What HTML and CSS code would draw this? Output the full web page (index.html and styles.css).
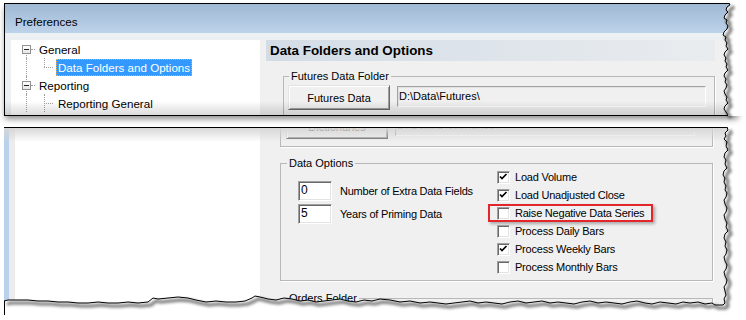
FILE: index.html
```html
<!DOCTYPE html>
<html lang="en">
  <head>
    <meta charset="UTF-8" />
    <title>Preferences - Data Folders and Options</title>
    <link rel="stylesheet" href="styles.css">
  </head>
  <body>
    <div class="shot">
      <!-- Upper torn piece: title bar, tree and folder group -->
      <div class="piece piece-top">
        <div class="titlebar">Preferences</div>
        <div class="win-body">
          <div class="tree">
            <div class="node">
              <span class="cell g-down hook-exp"><span class="exp"></span></span>
              <span class="label">General</span>
            </div>
            <div class="node">
              <span class="cell g-full"></span>
              <span class="cell g-elbow hook"></span>
              <span class="label selected">Data Folders and Options</span>
            </div>
            <div class="node">
              <span class="cell g-full hook-exp"><span class="exp"></span></span>
              <span class="label">Reporting</span>
            </div>
            <div class="node">
              <span class="cell g-full"></span>
              <span class="cell g-full hook"></span>
              <span class="label">Reporting General</span>
            </div>
          </div>
          <div class="panel">
            <div class="panel-head">Data Folders and Options</div>
            <fieldset class="group group-futures">
              <legend>Futures Data Folder</legend>
              <div class="folder-row">
                <button class="btn">Futures Data</button>
                <div class="path-field">D:\Data\Futures\</div>
              </div>
            </fieldset>
          </div>
        </div>
        <div class="fade-bottom"></div>
      </div>

      <!-- Lower torn piece: data options -->
      <div class="piece piece-bottom">
        <div class="win-body">
          <div class="frame-blue"></div>
          <div class="frame-gray"></div>
          <div class="tree tree-low"></div>
          <div class="panel">
            <div class="group group-cut">
              <button class="btn">Dictionaries</button>
              <div class="path-field">D:\Data\Dictionaries\</div>
            </div>

            <fieldset class="group group-options">
              <legend>Data Options</legend>
              <div class="options">
                <div class="fields">
                  <div class="field-row">
                    <div class="num">0</div>
                    <span>Number of Extra Data Fields</span>
                  </div>
                  <div class="field-row">
                    <div class="num">5</div>
                    <span>Years of Priming Data</span>
                  </div>
                </div>
                <div class="checks">
                  <div class="check-row">
                    <span class="box"><svg width="11" height="11" viewBox="0 0 11 11"><polyline points="2,4.5 4,6.5 8.5,2" fill="none" stroke="#000" stroke-width="1.7"/></svg></span>
                    <span>Load Volume</span>
                  </div>
                  <div class="check-row">
                    <span class="box"><svg width="11" height="11" viewBox="0 0 11 11"><polyline points="2,4.5 4,6.5 8.5,2" fill="none" stroke="#000" stroke-width="1.7"/></svg></span>
                    <span>Load Unadjusted Close</span>
                  </div>
                  <div class="check-row">
                    <span class="box"></span>
                    <span>Raise Negative Data Series</span>
                    <div class="callout"></div>
                  </div>
                  <div class="check-row">
                    <span class="box"></span>
                    <span>Process Daily Bars</span>
                  </div>
                  <div class="check-row">
                    <span class="box"><svg width="11" height="11" viewBox="0 0 11 11"><polyline points="2,4.5 4,6.5 8.5,2" fill="none" stroke="#000" stroke-width="1.7"/></svg></span>
                    <span>Process Weekly Bars</span>
                  </div>
                  <div class="check-row">
                    <span class="box"></span>
                    <span>Process Monthly Bars</span>
                  </div>
                </div>
              </div>
            </fieldset>

            <fieldset class="group group-orders">
              <legend>Orders Folder</legend>
              <div class="orders-space"></div>
            </fieldset>
          </div>
        </div>
        <div class="fade-top"></div>
      </div>

      <!-- Torn paper edges -->
      <svg class="tears" width="746" height="320" viewBox="0 0 746 320">
        <defs>
          <filter id="soft" x="-20%" y="-20%" width="140%" height="140%">
            <feGaussianBlur stdDeviation="1.6" />
          </filter>
        </defs>
        <polygon fill="#fff" points="729,2 729,3 730,5 727,7 726,10 728,12 725,15 724,18 727,20 726,23 728,26 727,29 724,32 723,35 726,37 725,40 727,43 726,46 728,49 725,52 724,55 726,58 725,61 727,64 726,67 728,70 725,73 724,76 726,79 725,82 727,85 726,88 724,91 725,94 727,97 726,100 728,103 725,106 724,109 726,112 728,115 728,116 746,116 746,2" />
        <polygon fill="#fff" points="727,126 727,127 728,130 725,133 726,136 724,139 727,142 726,146 728,150 725,153 724,157 726,160 725,164 727,168 724,171 723,175 725,178 724,182 726,186 725,190 727,193 726,197 724,200 725,204 727,208 726,212 724,215 725,219 727,223 726,227 728,231 725,234 724,238 726,242 725,246 727,250 726,254 724,257 725,261 727,265 726,269 724,272 725,276 727,280 726,284 724,287 725,291 726,295 724,299 725,303 723,305 715,305 712,303 705,304 698,302 690,303 683,302 676,304 668,303 660,302 652,304 645,303 637,301 630,302 622,304 614,303 606,302 598,303 590,301 582,302 574,304 566,303 558,302 550,303 542,301 534,302 526,303 518,301 510,302 502,304 494,303 486,302 478,303 470,301 462,302 454,303 446,304 438,303 430,302 420,303 410,301 400,302 390,300 380,299 372,301 364,300 356,302 348,301 340,299 332,300 324,301 316,302 308,300 300,301 292,299 284,298 276,300 268,299 260,297 255,296 252,298 245,301 236,302 226,302 216,301 206,302 196,300 188,298 178,297 168,298 158,299 153,298 148,302 138,303 128,302 118,303 108,303 98,302 88,303 78,303 68,302 58,302 48,301 38,301 28,300 18,300 8,300 4,301 0,301 0,320 746,320 746,126" />

        <g filter="url(#soft)" opacity="0.55" transform="translate(3,3)">
          <polyline fill="none" stroke="#000" stroke-width="3" points="729,3 730,5 727,7 726,10 728,12 725,15 724,18 727,20 726,23 728,26 727,29 724,32 723,35 726,37 725,40 727,43 726,46 728,49 725,52 724,55 726,58 725,61 727,64 726,67 728,70 725,73 724,76 726,79 725,82 727,85 726,88 724,91 725,94 727,97 726,100 728,103 725,106 724,109 726,112 728,115" />
          <polyline fill="none" stroke="#000" stroke-width="3" points="727,127 728,130 725,133 726,136 724,139 727,142 726,146 728,150 725,153 724,157 726,160 725,164 727,168 724,171 723,175 725,178 724,182 726,186 725,190 727,193 726,197 724,200 725,204 727,208 726,212 724,215 725,219 727,223 726,227 728,231 725,234 724,238 726,242 725,246 727,250 726,254 724,257 725,261 727,265 726,269 724,272 725,276 727,280 726,284 724,287 725,291 726,295 724,299 725,303 723,305 715,305 712,303 705,304 698,302 690,303 683,302 676,304 668,303 660,302 652,304 645,303 637,301 630,302 622,304 614,303 606,302 598,303 590,301 582,302 574,304 566,303 558,302 550,303 542,301 534,302 526,303 518,301 510,302 502,304 494,303 486,302 478,303 470,301 462,302 454,303 446,304 438,303 430,302 420,303 410,301 400,302 390,300 380,299 372,301 364,300 356,302 348,301 340,299 332,300 324,301 316,302 308,300 300,301 292,299 284,298 276,300 268,299 260,297 255,296 252,298 245,301 236,302 226,302 216,301 206,302 196,300 188,298 178,297 168,298 158,299 153,298 148,302 138,303 128,302 118,303 108,303 98,302 88,303 78,303 68,302 58,302 48,301 38,301 28,300 18,300 8,300 4,301" />
        </g>

        <polyline fill="none" stroke="#000" stroke-width="1" points="729,3 730,5 727,7 726,10 728,12 725,15 724,18 727,20 726,23 728,26 727,29 724,32 723,35 726,37 725,40 727,43 726,46 728,49 725,52 724,55 726,58 725,61 727,64 726,67 728,70 725,73 724,76 726,79 725,82 727,85 726,88 724,91 725,94 727,97 726,100 728,103 725,106 724,109 726,112 728,115" />
        <polyline fill="none" stroke="#000" stroke-width="1" points="727,127 728,130 725,133 726,136 724,139 727,142 726,146 728,150 725,153 724,157 726,160 725,164 727,168 724,171 723,175 725,178 724,182 726,186 725,190 727,193 726,197 724,200 725,204 727,208 726,212 724,215 725,219 727,223 726,227 728,231 725,234 724,238 726,242 725,246 727,250 726,254 724,257 725,261 727,265 726,269 724,272 725,276 727,280 726,284 724,287 725,291 726,295 724,299 725,303 723,305 715,305 712,303 705,304 698,302 690,303 683,302 676,304 668,303 660,302 652,304 645,303 637,301 630,302 622,304 614,303 606,302 598,303 590,301 582,302 574,304 566,303 558,302 550,303 542,301 534,302 526,303 518,301 510,302 502,304 494,303 486,302 478,303 470,301 462,302 454,303 446,304 438,303 430,302 420,303 410,301 400,302 390,300 380,299 372,301 364,300 356,302 348,301 340,299 332,300 324,301 316,302 308,300 300,301 292,299 284,298 276,300 268,299 260,297 255,296 252,298 245,301 236,302 226,302 216,301 206,302 196,300 188,298 178,297 168,298 158,299 153,298 148,302 138,303 128,302 118,303 108,303 98,302 88,303 78,303 68,302 58,302 48,301 38,301 28,300 18,300 8,300 4,301" />
        <line x1="4.5" y1="301" x2="4.5" y2="315" stroke="#000" stroke-width="1" />
      </svg>
    </div>
  </body>
</html>
```

FILE: styles.css
```css
* {
  margin: 0;
  padding: 0;
  box-sizing: border-box;
}

body {
  background-color: #fff;
  font-family: "Liberation Sans", Arial, sans-serif;
  font-size: 11px;
  color: #000;
}

.shot {
  position: relative;
  width: 746px;
  height: 320px;
  overflow: hidden;
  padding: 3px 0 0 4px;
}

.piece {
  position: relative;
  width: 735px;
  overflow: hidden;
}

/* Upper piece */
.piece-top {
  height: 113px;
  border-top: 1px solid #000;
  border-left: 1px solid #000;
  border-bottom: 1px solid #000;
  box-shadow: 0 4px 6px -1px rgba(0, 0, 0, 0.45);
}

.titlebar {
  height: 29px;
  padding: 10px 0 0 10px;
  line-height: 16px;
  font-size: 11.6px;
  background: linear-gradient(#9fb8d3, #bdd3ea);
}

.win-body {
  display: flex;
  height: 82px;
  padding: 7px 0 0 6px;
  background-color: #edf0f3;
}

.tree {
  width: 249px;
  flex: none;
  background-color: #fff;
  font-size: 11.6px;
  padding-left: 6px;
}

.node {
  display: flex;
  align-items: center;
  height: 18px;
}

.cell {
  position: relative;
  width: 18px;
  height: 18px;
  flex: none;
}

.g-full::before,
.g-down::before,
.g-elbow::before {
  content: "";
  position: absolute;
  left: 9px;
  top: 0;
  bottom: 0;
  border-left: 1px dotted #a0a0a0;
}

.g-down::before {
  top: 9px;
}

.g-elbow::before {
  bottom: 9px;
}

.hook::after,
.hook-exp::after {
  content: "";
  position: absolute;
  left: 9px;
  right: 0;
  top: 9px;
  border-top: 1px dotted #a0a0a0;
}

.hook-exp::after {
  left: 14px;
}

.exp {
  position: absolute;
  left: 5px;
  top: 5px;
  width: 9px;
  height: 9px;
  border: 1px solid #919191;
  background: linear-gradient(#fff, #e6e6e6);
  z-index: 1;
}

.exp::after {
  content: "";
  position: absolute;
  left: 1px;
  top: 3px;
  width: 5px;
  height: 1px;
  background-color: #222;
}

.label {
  height: 17px;
  line-height: 15px;
  padding: 0 1px;
  margin-left: 2px;
  border: 1px solid transparent;
  white-space: nowrap;
}

.cell + .cell + .label {
  margin-left: 3px;
}

.label.selected {
  background-color: #3399ff;
  color: #fff;
  border: 1px dotted #f0a848;
}

.panel {
  flex: 1;
  background-color: #f0f0f0;
}

.panel-head {
  width: 449px;
  height: 21px;
  margin-left: 6px;
  padding-left: 4px;
  line-height: 21px;
  font-size: 13.4px;
  font-weight: bold;
  background: linear-gradient(to right, #d3dce6, #e9ecef);
}

.group {
  border: 1px solid #b8b8b8;
  box-shadow: 1px 1px 0 #fff;
}

.group legend {
  margin-left: 6px;
  padding: 0 2px;
  line-height: 13px;
}

.group-futures {
  width: 432px;
  margin: 9px 0 0 23px;
  padding: 2px 4px 8px 0;
}

.group-futures legend {
  margin-left: 5px;
}

.folder-row {
  display: flex;
  align-items: flex-start;
  padding-left: 4px;
}

.btn {
  width: 102px;
  height: 25px;
  flex: none;
  font: inherit;
  color: #000;
  background-color: #f0f0f0;
  border: 1px solid;
  border-color: #e3e3e3 #696969 #696969 #e3e3e3;
  box-shadow: inset 1px 1px 0 #fff, inset -1px -1px 0 #a0a0a0;
}

.path-field {
  width: 309px;
  height: 21px;
  margin: 1px 0 0 7px;
  padding-left: 1px;
  line-height: 19px;
  background-color: #f0f0f0;
  border: 1px solid;
  border-color: #a0a0a0 #fff #fff #a0a0a0;
  box-shadow: inset 1px 1px 0 #e3e3e3;
}

.fade-bottom {
  position: absolute;
  left: 0;
  right: 0;
  bottom: 0;
  height: 14px;
  background: linear-gradient(rgba(0, 0, 0, 0), rgba(0, 0, 0, 0.14));
}

/* Lower piece */
.piece-bottom {
  margin-top: 11px;
  height: 193px;
  border-top: 1px solid #000;
}

.piece-bottom .win-body {
  height: 100%;
  padding: 0;
}

.frame-blue {
  width: 5px;
  background-color: #b9d1ea;
}

.frame-gray {
  width: 6px;
  background-color: #ececec;
}

.tree-low {
  width: 245px;
}

.group-cut {
  display: flex;
  width: 433px;
  margin: -14px 0 0 20px;
  padding: 0 4px 7px 5px;
  border-top: none;
}

.group-cut .path-field {
  width: 300px;
}

.group-options {
  width: 433px;
  margin: 10px 0 0 20px;
  padding: 0 0 4px 0;
}

.options {
  display: flex;
  padding-left: 17px;
  letter-spacing: -0.22px;
}

.fields {
  width: 199px;
  flex: none;
  padding-top: 11px;
  display: flex;
  flex-direction: column;
  gap: 3px;
}

.field-row {
  display: flex;
  align-items: center;
  gap: 8px;
}

.num {
  width: 34px;
  height: 20px;
  padding-left: 2px;
  line-height: 17px;
  font-size: 12px;
  background-color: #fff;
  border: 1px solid;
  border-color: #a0a0a0 #fff #fff #a0a0a0;
  box-shadow: inset 1px 1px 0 #696969, inset -1px -1px 0 #e3e3e3;
}

.checks {
  margin-top: -2px;
}

.check-row {
  position: relative;
  display: flex;
  align-items: center;
  height: 18px;
}

.box {
  width: 13px;
  height: 13px;
  margin-right: 5px;
  flex: none;
  background-color: #fff;
  border: 1px solid;
  border-color: #a0a0a0 #fff #fff #a0a0a0;
  box-shadow: inset 1px 1px 0 #696969, inset -1px -1px 0 #e3e3e3;
}

.box svg {
  display: block;
}

.callout {
  position: absolute;
  left: -9px;
  top: 0;
  width: 165px;
  height: 18px;
  border: 2px solid #e3262b;
  box-shadow: 2px 2px 3px rgba(0, 0, 0, 0.3);
}

.group-orders {
  width: 433px;
  margin: 11px 0 0 20px;
}

.orders-space {
  height: 30px;
}

.fade-top {
  position: absolute;
  left: 0;
  right: 0;
  top: 0;
  height: 14px;
  background: linear-gradient(rgba(214, 214, 214, 0.95), rgba(240, 240, 240, 0));
}

.tears {
  position: absolute;
  left: 0;
  top: 0;
  pointer-events: none;
}
```
